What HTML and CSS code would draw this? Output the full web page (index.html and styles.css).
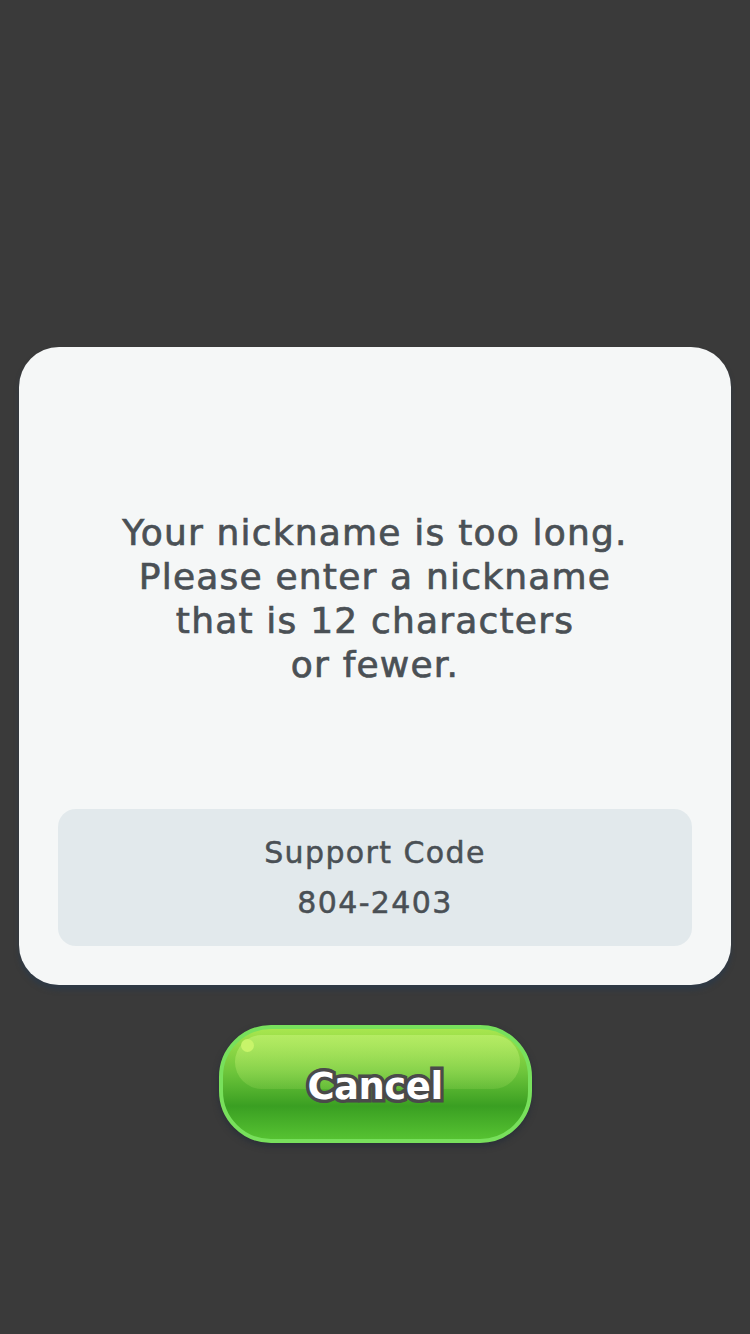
FILE: index.html
```html
<!DOCTYPE html>
<html lang="en">
<head>
    <meta charset="UTF-8">
    <meta name="viewport" content="width=device-width, initial-scale=1.0">
    <title>Nickname Error</title>
    <link rel="stylesheet" href="styles.css">
</head>
<body>
    <div class="screen">
        <div class="dialog">
            <p class="message">Your nickname is too long.<br>Please enter a nickname<br>that is 12 characters<br>or fewer.</p>
            <div class="support">
                <div class="support-label">Support Code</div>
                <div class="support-code">804-2403</div>
            </div>
        </div>
        <button class="cancel-btn"><span class="shine"></span><span class="dot"></span><span class="label">Cancel</span></button>
    </div>
</body>
</html>
```
FILE: styles.css
```css
body {
    margin: 0;
    background-color: #3a3a3a;
    font-family: "DejaVu Sans", "Liberation Sans", sans-serif;
}
.screen {
    width: 750px;
    height: 1334px;
    display: flex;
    flex-direction: column;
    align-items: center;
    padding-top: 347px;
    box-sizing: border-box;
}
.dialog {
    width: 712px;
    height: 638px;
    box-sizing: border-box;
    background-color: #f5f7f7;
    border-radius: 40px;
    box-shadow: 0 5px 5px rgba(45, 58, 72, 0.85);
    display: flex;
    flex-direction: column;
    align-items: center;
    padding: 0 39px 39px;
}
.message {
    flex: 1;
    margin: 0;
    display: flex;
    align-items: center;
    justify-content: center;
    text-align: center;
    font-size: 36px;
    line-height: 44px;
    letter-spacing: 1.2px;
    color: #4a5055;
    -webkit-text-stroke: 0.7px #4a5055;
    padding-top: 42px;
}
.support {
    width: 100%;
    height: 137px;
    background-color: #e2e9ec;
    border-radius: 18px;
    display: flex;
    flex-direction: column;
    align-items: center;
    justify-content: center;
    color: #4a5055;
    -webkit-text-stroke: 0.5px #4a5055;
    font-size: 30px;
    line-height: 50px;
    letter-spacing: 1.4px;
}
.cancel-btn {
    position: relative;
    margin-top: 40px;
    width: 313px;
    height: 118px;
    border-radius: 52px;
    border: 4px solid #78e05c;
    background: linear-gradient(#a8e64e 0%, #6cc43a 40%, #3a9f22 70%, #56c232 100%);
    box-shadow: 0 3px 6px rgba(30, 40, 55, 0.6);
    padding: 0;
    cursor: pointer;
    overflow: hidden;
}
.shine {
    position: absolute;
    left: 12px;
    right: 8px;
    top: 6px;
    height: 54px;
    border-radius: 40px;
    background: linear-gradient(rgba(190, 240, 110, 0.7), rgba(140, 210, 80, 0.3));
}
.dot {
    position: absolute;
    left: 18px;
    top: 10px;
    width: 13px;
    height: 13px;
    border-radius: 50%;
    background-color: #c8f46a;
}
.label {
    position: relative;
    top: 2px;
    font-family: "DejaVu Sans", sans-serif;
    font-weight: bold;
    font-size: 37px;
    color: #ffffff;
    -webkit-text-stroke: 7px #4a4a4a;
    paint-order: stroke fill;
    letter-spacing: -0.5px;
}
```
